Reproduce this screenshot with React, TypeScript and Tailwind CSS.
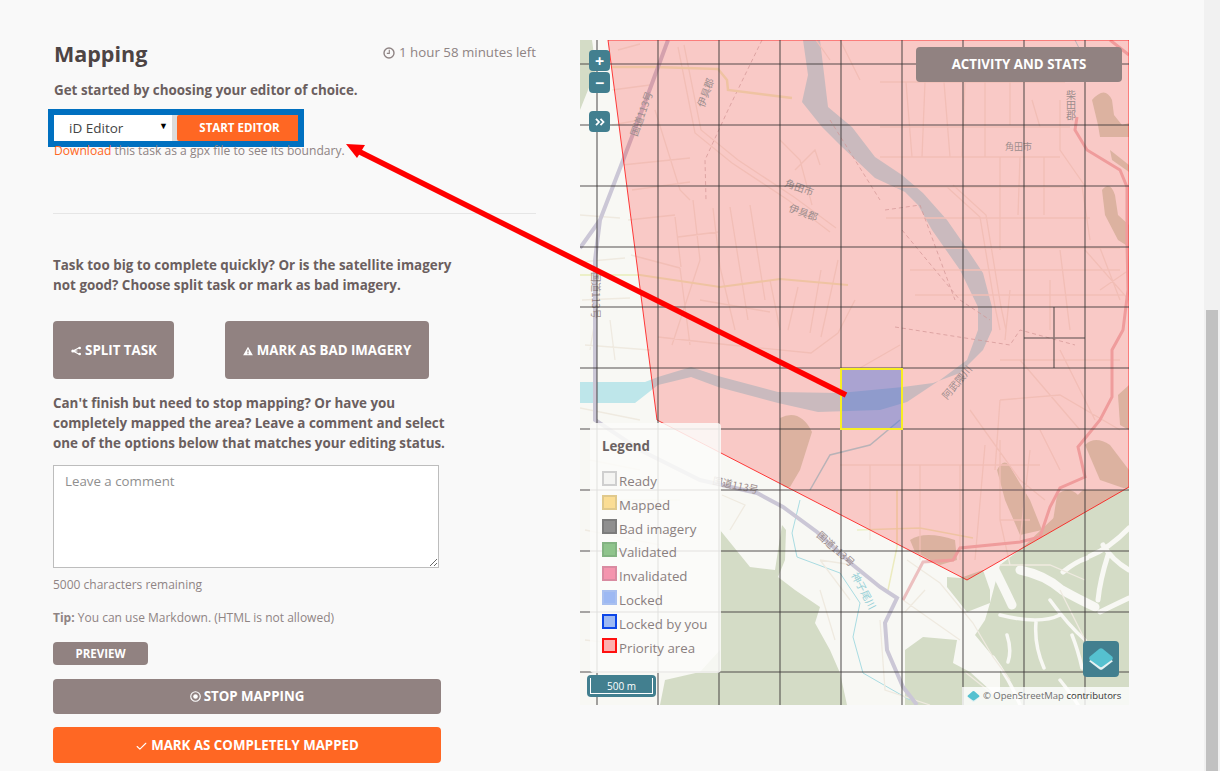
import { Check } from "lucide-react";

const legend = [
  { label: "Ready", box: "bg-[#f4f4f2] border-[#cfcfcf]" },
  { label: "Mapped", box: "bg-[#fbdd94] border-[#e0c98c]" },
  { label: "Bad imagery", box: "bg-[#8f8f8f] border-[#7c7c7c]" },
  { label: "Validated", box: "bg-[#8fc48c] border-[#83b382]" },
  { label: "Invalidated", box: "bg-[#f495ae] border-[#d98ba1]" },
  { label: "Locked", box: "bg-[#9db9f3] border-[#a9c0ef]" },
  { label: "Locked by you", box: "bg-[#9db9f3] border-[#0c46e8]" },
  { label: "Priority area", box: "bg-[#fdb0b0] border-[#ff1010]" },
];

const gridX = [597, 658, 719, 780, 841, 902, 963, 1024, 1085];
const gridY = [64, 125, 186, 247, 307, 368, 429, 490, 551, 612, 672];

const streets =
  // north west blocks
  "M618 50L640 44M612 90L650 85M612 125L640 120M622 165L690 158M632 190L690 182M628 220L675 215M631 255L680 268M678 237L718 232" +
  "M675 217L681 267M693 200L700 260M713 208L720 267M730 207L748 320M750 205L765 300M680 268L690 345M700 260L672 345M720 267L735 330" +
  "M678 47L695 133L732 163L788 200L830 232M684 45L701 130L738 160L794 197L836 228M655 110L680 190L690 200" +
  "M658 337L730 345L811 353L838 333L855 300M700 300L770 312M788 330L798 287M810 333L821 270M821 337L838 260M770 280L780 330" +
  "M795 170L815 150L820 165M780 140L800 160L812 205M816 40L830 60M840 40L860 80" +
  // north east blocks
  "M880 82H1065M880 127H1070M880 157H1060M895 187H1070M886 218H1090M900 248H1120M910 270H1120M915 295H1125" +
  "M906 82L912 157M925 82L922 157M944 82L950 157M965 82L962 157M985 82L985 157M1010 82V125M1032 100L1040 127M1060 100V150L1085 186" +
  "M1020 157L1018 215M1000 157L1000 250M1044 157L1044 215M1082 186L1090 240M1085 250L1129 300M1060 250L1070 330M1100 248L1120 300" +
  "M1010 290L1005 340M1050 280V330M960 60L1000 60M1100 290L1129 270M947 187L980 217L995 307L1000 330M953 185L986 215L1001 307L1006 330" +
  // south of the river
  "M860 368L900 345M1000 400L1060 395L1120 430M970 410L1020 480L1045 500M1020 360L1080 430M1060 350L1095 420M1000 400L995 470" +
  "M840 465H1040M841 490H1060M870 465V540M920 465V560M960 465V560M1000 440V520L1010 565H1050M985 445L975 560M1030 450L1020 540M1000 520H1030M1040 430L1060 470M1000 360H1120" +
  "M820 560L853 565M907 560L940 583L973 623L993 657L1010 680M903 600L960 640M925 590L905 612M820 590L835 640M880 620L885 690L930 705" +
  "M1000 565L1050 565L1085 580M1060 590L1085 640L1090 655M965 672L1000 700" +
  // west strip and under the legend
  "M580 215L620 218M580 262L625 258M582 300L630 298M585 345L650 350M600 290L590 350M610 320L615 360M580 408L640 420M600 500H680M585 530L660 545M590 460L640 470M585 640L670 650" +
  "M722 495L745 505L730 530M820 560L850 600";

const dashed = "M762 40L728 110L705 160L706 200M830 120L880 200M902 230L960 300L990 320M895 327L1010 345L1020 330L1075 345M885 210L920 205L955 300";

function ShareIcon() {
  return (
    <svg viewBox="0 0 12 10" className="w-[11px] h-[10px]" fill="none" stroke="currentColor" strokeWidth="1.3">
      <path d="M2 5L9 1.5M2 5L9 8.5M2 5H7" />
      <circle cx="2" cy="5" r="1.7" fill="currentColor" stroke="none" />
      <circle cx="9.5" cy="1.7" r="1.4" fill="currentColor" stroke="none" />
      <circle cx="9.5" cy="8.3" r="1.4" fill="currentColor" stroke="none" />
    </svg>
  );
}

function WarnIcon() {
  return (
    <svg viewBox="0 0 12 11" className="w-[10px] h-[10px]">
      <path fillRule="evenodd" fill="currentColor" d="M6 .3L11.8 10.7H.2ZM5.3 4V7.3H6.7V4ZM5.3 8V9.3H6.7V8Z" />
    </svg>
  );
}

function TargetIcon() {
  return (
    <svg viewBox="0 0 12 12" className="w-[11px] h-[11px]" fill="none" stroke="currentColor" strokeWidth="1.2">
      <circle cx="6" cy="6" r="5.2" />
      <circle cx="6" cy="6" r="2.5" fill="currentColor" stroke="none" />
    </svg>
  );
}

function ClockIcon() {
  return (
    <svg viewBox="0 0 12 12" className="w-3 h-3" fill="none" stroke="currentColor" strokeWidth="1.4">
      <circle cx="6" cy="6" r="5" />
      <path d="M6.3 2.8V6.4H3.8" strokeWidth="1.1" />
    </svg>
  );
}

function LayersGlyph({ size }: { size: number }) {
  return (
    <svg viewBox="0 0 24 24" width={size} height={size}>
      <path d="M12 5L23 14L13.5 21.5Q12 22.5 10.5 21.5L1 14Z" fill="#e6f2f3" />
      <path d="M10.5 2.5Q12 1.5 13.5 2.5L22.5 10Q23.5 11.5 22.5 12.5L13.5 19Q12 20 10.5 19L1.5 12.5Q.5 11.5 1.5 10Z" fill="#55c1d0" />
    </svg>
  );
}

function MapDrawing() {
  return (
    <svg viewBox="580 40 549 665" className="w-full h-full block">
      <rect x="580" y="40" width="549" height="665" fill="#f8f8f4" />

      {/* woods, they turn brown under the priority area */}
      <g fill="#d4dcc6">
        <path d="M580 40H592L596 70L580 110Z" />
        <path d="M720 530L750 567L775 570L782 525L786 530L785 560L778 577L795 590L820 607L815 623L830 650L840 673L847 705H660L665 680L700 672L720 650Z" />
        <path d="M905 650L923 637L957 640L953 663L970 672L990 690L1000 705H905Z" />
        <path d="M947 577L960 578L983 570L990 590L990 603L967 612L947 587Z" />
        <path d="M990 603L1000 565L1023 547L1083 490L1129 490V705H985L1000 690L1000 665L975 635L985 620Z" />
        <path d="M780 418Q800 408 812 432L800 470L790 487Q778 490 780 470Z" />
        <path d="M997 470Q1005 455 1012 470L1030 500L1042 530L1020 535L1005 500Z" />
        <path d="M1085 445Q1095 435 1110 445L1129 470V490L1100 480Z" />
        <path d="M1057 495Q1068 485 1078 495L1090 525L1050 540Z" />
        <path d="M910 540Q925 530 955 540L957 560L940 565L915 552Z" />
        <path d="M1092 100Q1105 85 1112 100L1114 115L1122 125L1129 123V137H1100L1098 125Z" />
        <path d="M1110 150L1129 165V172L1112 160Z" />
        <path d="M1102 190Q1110 180 1115 195L1118 215L1129 225V247L1118 240L1105 215Z" />
        <path d="M1118 395L1129 385V430L1120 425Z" />
      </g>
      {/* clearings in the south east woods */}
      <g fill="none" stroke="#f8f8f4" strokeLinecap="round">
        <path strokeWidth="9" d="M995 570Q1005 590 1012 605M1020 570Q1045 575 1062 590Q1080 600 1095 607" />
        <path strokeWidth="5" d="M1063 572Q1075 562 1087 558M1090 556Q1110 548 1129 528M1103 545Q1112 560 1129 570M1108 555Q1100 580 1098 600M1129 598Q1112 606 1100 612" />
        <path strokeWidth="3.5" d="M1007 635Q1012 650 1008 662M1036 622Q1034 645 1044 668M1072 635Q1078 650 1082 668M1000 615Q1040 625 1060 615M1050 600Q1068 625 1085 640M993 657Q1010 680 1020 705M1060 680Q1072 695 1078 705" />
      </g>

      {/* river and canals */}
      <path
        d="M803 40L808 75L802 102L822 127L842 147L875 178L905 192L918 205L932 230L960 270L978 307L978 330L967 360L940 380L907 402L880 410L818 412L778 403L718 387L691 377L658 385L635 403L578 403V382L645 382L658 377L691 367L718 376L778 392L840 393L903 387L933 383L960 373L983 350L992 330L992 307L983 273L963 243L947 220L923 193L902 175L875 157L852 127L828 107L820 40Z"
        fill="#bee6ea"
      />
      <path d="M900 420L870 445L830 455L810 490" fill="none" stroke="#a9dce2" strokeWidth="1.5" />
      <path d="M800 500L792 533L797 557L840 573L860 603L853 637L863 673L910 700" fill="none" stroke="#a9dce2" strokeWidth="1" />
      <path d="M1075 40L1090 70" fill="none" stroke="#a9dce2" strokeWidth="1" />

      {/* streets */}
      <path d={streets} fill="none" stroke="#efeae0" strokeWidth="1.3" />
      <path d={dashed} fill="none" stroke="#c7b6b6" strokeWidth="0.7" strokeDasharray="4 3" />
      <path d="M612 67H655L718 69L727 80L728 90L792 98" fill="none" stroke="#ecf0c8" strokeWidth="2.5" />
      <path d="M578 275H640L720 287L780 279L848 285" fill="none" stroke="#ecf0c8" strokeWidth="2" />
      <path d="M857 530L920 528L973 538" fill="none" stroke="#ecf0c8" strokeWidth="1.5" />
      <path d="M897 490V547L888 590" fill="none" stroke="#ecebbf" strokeWidth="1.5" />

      {/* national route 113 */}
      <path
        d="M668 40L647 97L622 163L600 220L580 248M600 220L595 260V420L640 450L700 480L757 493L783 507L817 532L853 565L880 587L897 598L885 623L887 650L903 687L917 705"
        fill="none"
        stroke="#cbc7d6"
        strokeWidth="4"
      />
      <path
        d="M1110 40L1129 55M1077 117L1075 130L1087 150L1120 170L1127 187V243L1128 290L1123 330L1112 350V397L1100 420L1078 447L1085 477L1060 488L1050 507L1040 537L1020 542L960 548L953 560L923 562L903 600"
        fill="none"
        stroke="#ecc0c0"
        strokeWidth="3"
      />

      {/* priority area */}
      <path
        d="M608 40L657 420L967 580L1129 487V40Z"
        fill="#ff0000"
        fillOpacity="0.19"
        stroke="#ff0000"
        strokeOpacity="0.75"
        strokeWidth="1"
      />

      {/* map labels */}
      <g fill="#9c8d8d" fontSize="10" fontFamily="'Noto Sans CJK JP', sans-serif">
        <text transform="translate(637 137) rotate(-70)">国道113号</text>
        <text transform="translate(704 108) rotate(-70)">伊具郡</text>
        <text transform="translate(784 186) rotate(20)">角田市</text>
        <text transform="translate(788 211) rotate(20)">伊具郡</text>
        <text x="1005" y="150" fontSize="9">角田市</text>
        <text transform="translate(592 272) rotate(90)" fontSize="10">国道113号</text>
        <text transform="translate(947 400) rotate(-50)">阿武隈川</text>
        <text transform="translate(816 536) rotate(42)">国道113号</text>
        <text transform="translate(851 575) rotate(62)" fill="#94cfd6">神子尾川</text>
        <text transform="translate(712 484) rotate(12)">国道113号</text>
        <text x="1071" y="90" fontSize="10" style={{ writingMode: "vertical-rl" }}>柴田郡</text>
      </g>

      {/* task grid */}
      <g stroke="#3c3838" strokeOpacity="0.58" strokeWidth="1.6">
        {gridX.map((x) => (
          <line key={x} x1={x} y1="40" x2={x} y2="705" />
        ))}
        {gridY.map((y) => (
          <line key={y} x1="580" y1={y} x2="1129" y2={y} />
        ))}
        <path d="M1054 307V368M1024 338H1085" fill="none" />
      </g>

      {/* locked task */}
      <rect x="841" y="369" width="61" height="60" fill="#3f6fe0" fillOpacity="0.42" stroke="#f7ee22" strokeWidth="2" />
    </svg>
  );
}

function MapPanel() {
  return (
    <div className="relative w-[549px] h-[665px] shrink-0">
      <MapDrawing />

      <div className="absolute left-[9px] top-[10px] flex flex-col gap-px text-white font-bold">
        <div className="w-[21px] h-[21px] rounded-sm bg-[#427f8f] flex items-center justify-center text-[16px] leading-none">+</div>
        <div className="w-[21px] h-[21px] rounded-sm bg-[#427f8f] flex items-center justify-center text-[16px] leading-none">−</div>
        <div className="mt-[17px] w-[21px] h-[21px] rounded-sm bg-[#427f8f] flex items-center justify-center">
          <svg viewBox="0 0 10 8" className="w-[10px] h-2" fill="none" stroke="currentColor" strokeWidth="1.8">
            <path d="M1 .8L4 4L1 7.2M5.5 .8L8.5 4L5.5 7.2" />
          </svg>
        </div>
      </div>

      <button className="absolute right-[7px] top-[7px] w-[206px] h-[35px] pt-px rounded bg-[#918281] text-white text-[13.3px] font-bold uppercase">
        Activity and stats
      </button>

      <div className="absolute left-[10px] top-[383px] w-[131px] h-[250px] rounded-sm bg-[#fbfbf9]/85 pl-3 pt-[14px]">
        <div className="text-[13.3px] font-bold text-[#6b6262] leading-[19px] mb-[15px]">Legend</div>
        {legend.map((item) => (
          <div key={item.label} className="flex items-start h-[23.8px] text-[13.3px] text-[#8a7f7f]">
            <span className={`w-[15px] h-[15px] border-2 shrink-0 mr-[2px] ${item.box}`} />
            <span className="leading-[19px] mt-[1px]">{item.label}</span>
          </div>
        ))}
      </div>

      <div className="absolute left-[7px] top-[635px] w-[69px] h-[22px] rounded bg-[#427f8f] p-[3px]">
        <div className="h-full border-x border-b border-white flex items-center justify-center text-[10px] text-white leading-none">
          500 m
        </div>
      </div>

      <div className="absolute right-[10px] top-[601px] w-9 h-9 rounded-sm bg-[#427f8f] flex items-center justify-center">
        <LayersGlyph size={26} />
      </div>

      <div className="absolute right-0 bottom-0 w-[167px] h-[18px] bg-white/80 flex items-center gap-[3px] pl-[5px] text-[9.5px] text-[#6f6f6f]">
        <LayersGlyph size={13} />
        <span>© OpenStreetMap <span className="text-[#333]">contributors</span></span>
      </div>
    </div>
  );
}

function TaskPanel() {
  return (
    <div className="w-[483px] shrink-0 text-[#6b5f5f]">
      <div className="flex items-start justify-between h-10 pl-px">
        <h1 className="text-[21.5px] font-bold leading-[30px] text-[#4d4444] -mt-px">Mapping</h1>
        <div className="flex items-center gap-1 text-[13.3px] leading-[19px] text-[#8f8484] mt-[3px]">
          <ClockIcon />
          <span>1 hour 58 minutes left</span>
        </div>
      </div>
      <p className="text-[13.4px] font-bold leading-[20px] pl-px">Get started by choosing your editor of choice.</p>

      <div className="w-[256px] h-[38px] -ml-[5px] mt-[9px] border-[6px] border-[#0070c0] flex bg-[#dcdcdc]">
        <div className="relative w-[118px] h-full bg-white">
          <select className="w-full h-full appearance-none bg-transparent pl-[15px] pb-[2px] text-[13.5px] text-[#444] outline-none">
            <option>iD Editor</option>
          </select>
          <span className="absolute right-[4px] top-[4px] text-[9px] text-black">▼</span>
        </div>
        <button className="ml-[5px] flex-1 pl-[4px] rounded-l-[2px] bg-[#ff6723] text-white text-[11.5px] font-bold uppercase">
          Start editor
        </button>
      </div>

      <p className="text-[12.1px] leading-[17px] text-[#8f8484] -mt-[5px] pl-px">
        <span className="text-[#ff6723]">Download</span> this task as a gpx file to see its boundary.
      </p>

      <hr className="mt-[54px] mb-[41px] border-[#e6e6e6]" />

      <p className="w-[410px] text-[13.4px] font-bold leading-[20px]">
        Task too big to complete quickly? Or is the satellite imagery not good? Choose split task or mark as bad imagery.
      </p>

      <div className="flex mt-[26px]">
        <button className="w-[121px] h-[58px] pt-px pl-px rounded bg-[#918281] text-white text-[13.3px] font-bold uppercase flex items-center justify-center gap-[3px]">
          <ShareIcon />
          Split task
        </button>
        <button className="ml-[51px] w-[204px] h-[58px] pt-px rounded bg-[#918281] text-white text-[13.3px] font-bold uppercase flex items-center justify-center gap-[4px]">
          <WarnIcon />
          Mark as bad imagery
        </button>
      </div>

      <p className="w-[400px] text-[13.4px] font-bold leading-[20px] mt-[14px]">
        Can't finish but need to stop mapping? Or have you completely mapped the area? Leave a comment and select one of the options below that matches your editing status.
      </p>

      <textarea
        placeholder="Leave a comment"
        className="block mt-3 w-[386px] h-[103px] bg-white border border-[#bdbdbd] px-[11px] py-[6px] text-[13.3px] leading-[18px] placeholder:text-[#8f8f8f] outline-none"
      />

      <p className="text-xs leading-[17px] text-[#8f8484] mt-2">5000 characters remaining</p>
      <p className="text-xs leading-[17px] text-[#8f8484] mt-[16px]">
        <b>Tip:</b> You can use Markdown. (HTML is not allowed)
      </p>

      <button className="block mt-4 w-[95px] h-[23px] rounded bg-[#918281] text-white text-[11.5px] font-bold uppercase">
        Preview
      </button>
      <button className="mt-[14px] w-[388px] h-[35px] rounded bg-[#918281] text-white text-[13.3px] font-bold uppercase flex items-center justify-center gap-[3px]">
        <TargetIcon />
        Stop mapping
      </button>
      <button className="mt-[13px] w-[388px] h-9 pt-[2px] rounded bg-[#ff6723] text-white text-[13.3px] font-bold uppercase flex items-center justify-center gap-[3px]">
        <Check size={13} strokeWidth={2} />
        Mark as completely mapped
      </button>
    </div>
  );
}

export default function App() {
  return (
    <div className="relative flex h-[771px] overflow-hidden bg-[#f9f9f9] font-['Open_Sans',sans-serif]">
      <div className="flex-1 flex pl-[53px] pt-10">
        <TaskPanel />
        <div className="ml-[44px]">
          <MapPanel />
        </div>
      </div>

      <div className="w-4 shrink-0 bg-[#f1f1f1] pt-[310px] px-[2px]">
        <div className="h-full bg-[#c1c1c1]" />
      </div>

      {/* annotation arrow */}
      <svg className="absolute left-0 top-0 pointer-events-none" width="1220" height="771">
        <path d="M846 395L358 151" stroke="#ff0000" strokeWidth="5.5" />
        <path d="M346 144L365 145L357 158Z" fill="#ff0000" />
      </svg>
    </div>
  );
}
